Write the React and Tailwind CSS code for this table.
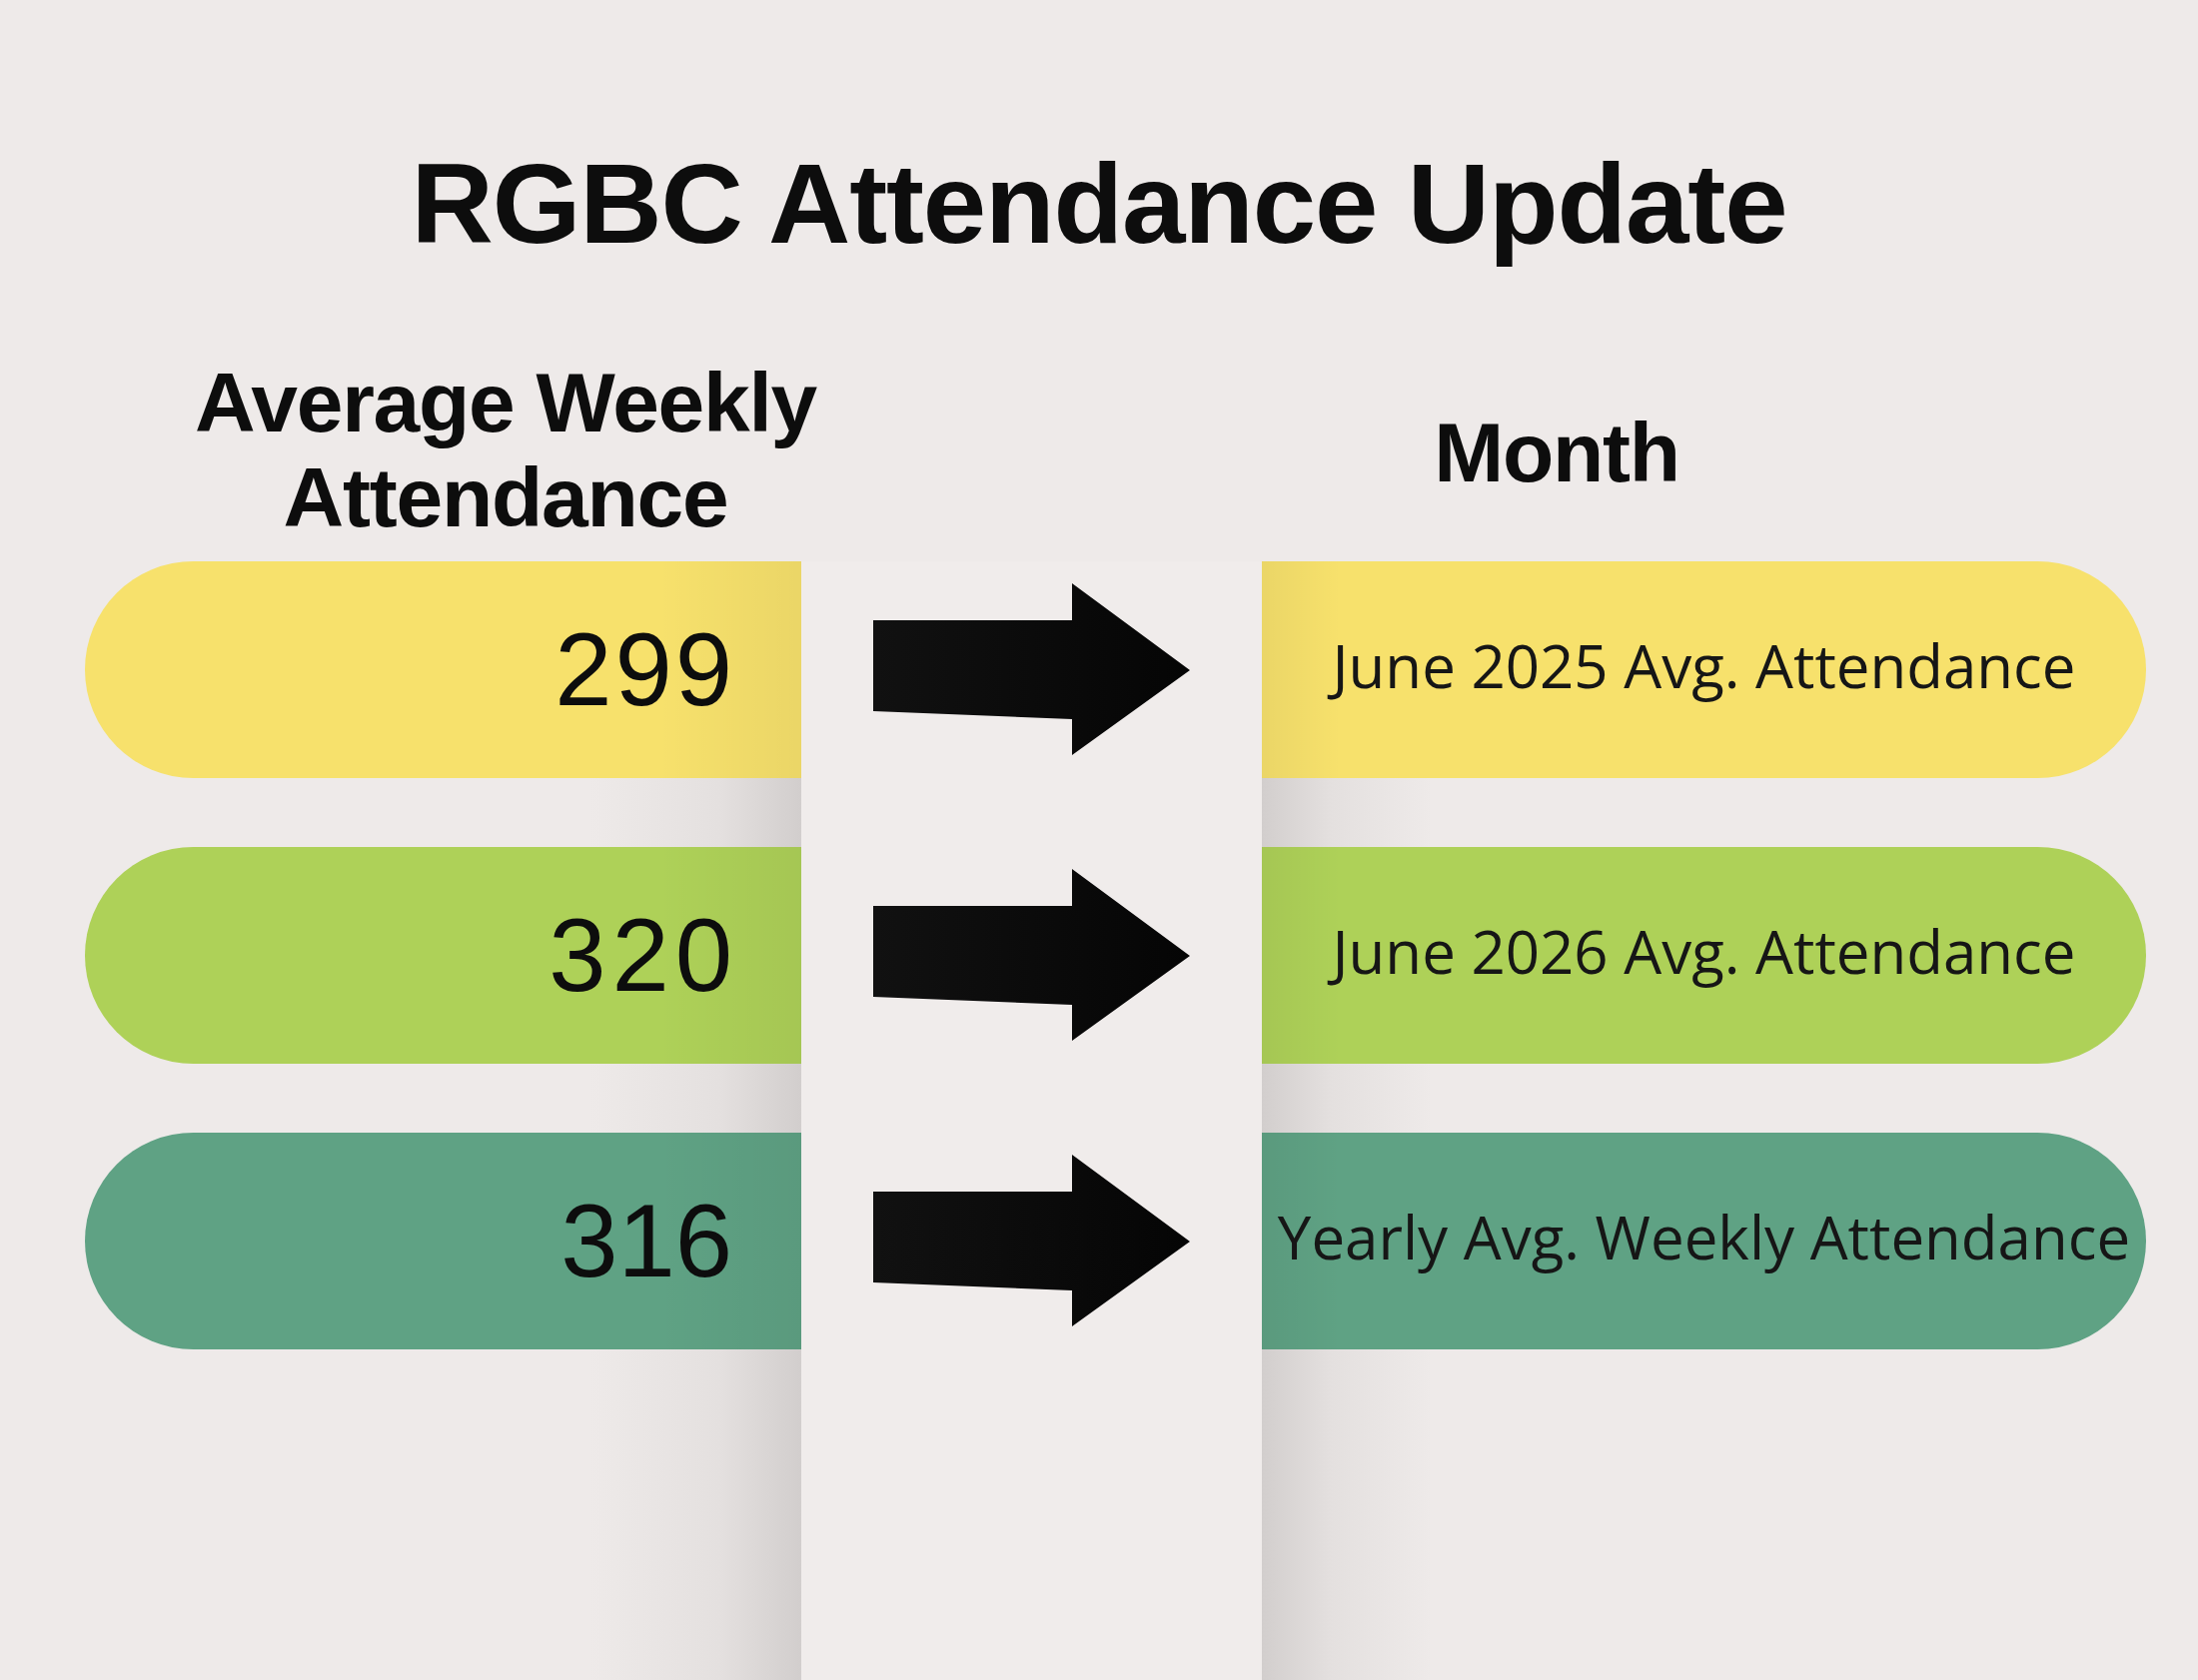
import React from "react";

const rows = [
  {
    num: "299",
    label: "June 2025 Avg. Attendance",
    color: "bg-[#f7e16c]",
    numCls: "tracking-[3px] pr-[66px]",
  },
  {
    num: "320",
    label: "June 2026 Avg. Attendance",
    color: "bg-[#aed158]",
    numCls: "tracking-[6px] pr-[63px]",
  },
  {
    num: "316",
    label: "Yearly Avg. Weekly Attendance",
    color: "bg-[#5fa284]",
    numCls: "tracking-[0px] pr-[69px]",
  },
];

function Arrow() {
  return (
    <svg width="317" height="172" viewBox="0 0 317 172" className="-mt-[2px]">
      <defs>
        <linearGradient id="ag" x1="0" x2="1" y1="0" y2="0">
          <stop offset="0" stopColor="#111" />
          <stop offset="1" stopColor="#050505" />
        </linearGradient>
      </defs>
      <polygon
        points="0,37 199,37 199,0 317,87 199,172 199,136 0,128"
        fill="url(#ag)"
      />
    </svg>
  );
}

export default function App() {
  return (
    <div className="w-[2200px] h-[1682px] bg-[#eeeae9] overflow-hidden flex flex-col font-['Liberation_Sans',Arial,sans-serif] text-[#0d0d0d]">
      <h1 className="pt-[147px] text-center text-[114px] leading-none font-bold tracking-[-0.01em]">
        RGBC Attendance Update
      </h1>

      <div className="mt-[95px] flex items-center font-bold text-[84px] leading-[95px] tracking-[-0.015em]">
        <div className="w-[1012px] text-center">
          <div>Average Weekly</div>
          <div>Attendance</div>
        </div>
        <div className="w-[1092px] text-center mt-[4px]">Month</div>
      </div>

      <div className="mt-[16px] flex flex-1">
        <div className="w-[802px] pl-[85px] flex flex-col gap-[69px] bg-[linear-gradient(90deg,#eeeae9_590px,#e4e0df_720px,#d2cecd_802px)]">
          {rows.map((r) => (
            <div
              key={r.num}
              className={`h-[217px] rounded-l-full ${r.color} bg-[linear-gradient(90deg,rgba(0,0,0,0)_80%,rgba(0,0,0,0.05))] flex items-center justify-end text-[103px] leading-none ${r.numCls}`}
            >
              {r.num}
            </div>
          ))}
        </div>

        <div className="w-[461px] bg-[#f0eceb] flex flex-col gap-[69px]">
          {rows.map((r) => (
            <div key={r.num} className="h-[217px] flex items-center justify-center">
              <Arrow />
            </div>
          ))}
        </div>

        <div className="w-[885px] flex flex-col gap-[69px] bg-[linear-gradient(90deg,#d2cecd_0px,#e4e0df_70px,#eeeae9_170px)]">
          {rows.map((r) => (
            <div
              key={r.num}
              className={`h-[217px] rounded-r-full ${r.color} bg-[linear-gradient(90deg,rgba(0,0,0,0.05),rgba(0,0,0,0)_9%)] flex items-center justify-center pb-[10px] font-['Open_Sans',sans-serif] text-[60px] leading-none text-[#161616] whitespace-nowrap`}
            >
              {r.label}
            </div>
          ))}
        </div>
      </div>
    </div>
  );
}
